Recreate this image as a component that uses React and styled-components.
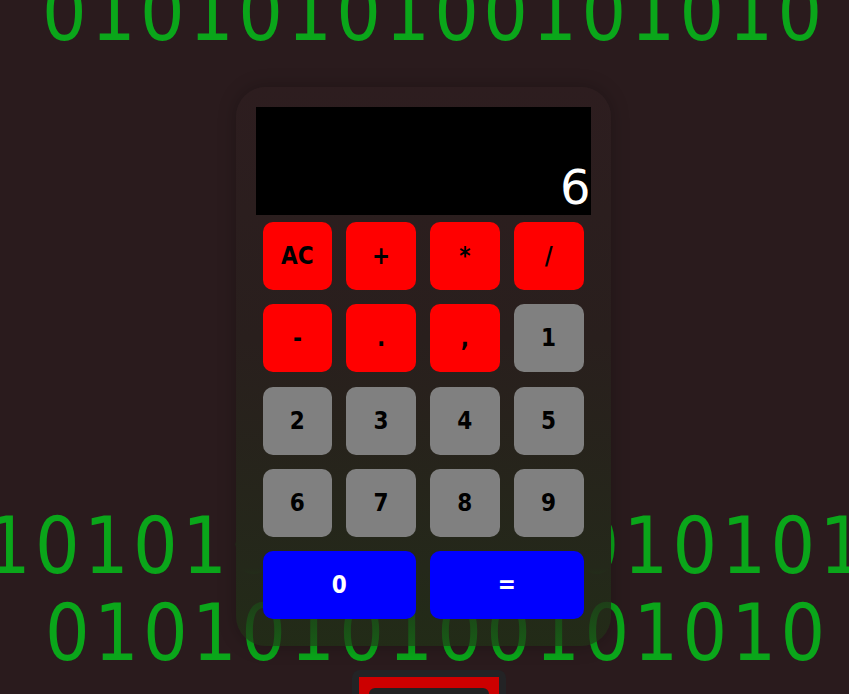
import React from "react";
import styled, { createGlobalStyle } from "styled-components";

const Global = createGlobalStyle`
  html, body {
    margin: 0;
    padding: 0;
    background: #2a1b1d;
    overflow: hidden;
    height: 100%;
  }
  body {
    font-family: "DejaVu Sans", sans-serif;
  }
`;

const Page = styled.div`
  position: relative;
  min-height: 694px;
  display: flex;
  flex-direction: column;
  align-items: center;
  padding-top: 87px;
  padding-right: 3px;
  box-sizing: border-box;
`;

const BinaryRow = styled.div`
  position: absolute;
  left: ${(p) => p.$left}px;
  top: ${(p) => p.$top}px;
  font-family: "DejaVu Sans Condensed", "DejaVu Sans", sans-serif;
  font-stretch: condensed;
  font-size: 78px;
  letter-spacing: 4.4px;
  line-height: 1;
  color: #0aa61a;
  white-space: nowrap;
  z-index: 0;
  user-select: none;
`;

const Card = styled.div`
  position: relative;
  z-index: 1;
  width: 375px;
  padding: 20px;
  box-sizing: border-box;
  border-radius: 30px;
  background: linear-gradient(
    180deg,
    rgb(45, 29, 31) 0%,
    rgb(41, 31, 29) 45%,
    rgb(36, 40, 26) 86%,
    rgba(30, 52, 20, 0.65) 100%
  );
  box-shadow: 0 0 18px rgba(0, 0, 0, 0.25);
`;

const Display = styled.div`
  height: 108px;
  background: #000;
  color: #fff;
  font-family: "DejaVu Sans", sans-serif;
  font-size: 48px;
  display: flex;
  align-items: flex-end;
  justify-content: flex-end;
  overflow: hidden;
`;

const Keys = styled.div`
  display: grid;
  grid-template-columns: repeat(4, 1fr);
  grid-auto-rows: 68px;
  column-gap: 14px;
  row-gap: 14.25px;
  padding: 7px;
`;

const palette = {
  op: { bg: "#ff0000", fg: "#000" },
  num: { bg: "#808080", fg: "#000" },
  big: { bg: "#0000ff", fg: "#fff" },
};

const Key = styled.button`
  grid-column: span ${(p) => p.$span || 1};
  border: none;
  border-radius: 10px;
  background: ${(p) => palette[p.$kind].bg};
  color: ${(p) => palette[p.$kind].fg};
  font-family: "DejaVu Sans Condensed", "DejaVu Sans", sans-serif;
  font-stretch: condensed;
  font-weight: bold;
  font-size: 24px;
  padding: 0;
  cursor: pointer;
  display: flex;
  align-items: center;
  justify-content: center;
`;

const Footer = styled.div`
  margin-top: 24px;
  margin-left: 12px;
  width: 154px;
  height: 60px;
  padding: 7px;
  box-sizing: border-box;
  background: #232325;
  border-radius: 8px;
  position: relative;
  z-index: 1;
`;

const FooterInner = styled.div`
  background: #cc0000;
  height: 100%;
  padding: 11px 10px 0;
  box-sizing: border-box;
`;

const FooterScreen = styled.div`
  background: #222;
  height: 40px;
  border-radius: 6px;
`;

const keys = [
  ["AC", "op"], ["+", "op"], ["*", "op"], ["/", "op"],
  ["-", "op"], [".", "op"], [",", "op"], ["1", "num"],
  ["2", "num"], ["3", "num"], ["4", "num"], ["5", "num"],
  ["6", "num"], ["7", "num"], ["8", "num"], ["9", "num"],
  ["0", "big", 2], ["=", "big", 2],
];

export default function App() {
  return (
    <>
      <Global />
      <Page>
        <BinaryRow $left={42} $top={-26}>0101010100101010</BinaryRow>
        <BinaryRow $left={-14} $top={507}>101010101101010101</BinaryRow>
        <BinaryRow $left={45} $top={594}>0101010100101010</BinaryRow>
        <Card>
          <Display>6</Display>
          <Keys>
            {keys.map(([label, kind, span]) => (
              <Key key={label} $kind={kind} $span={span}>
                {label}
              </Key>
            ))}
          </Keys>
        </Card>
        <Footer>
          <FooterInner>
            <FooterScreen />
          </FooterInner>
        </Footer>
      </Page>
    </>
  );
}
